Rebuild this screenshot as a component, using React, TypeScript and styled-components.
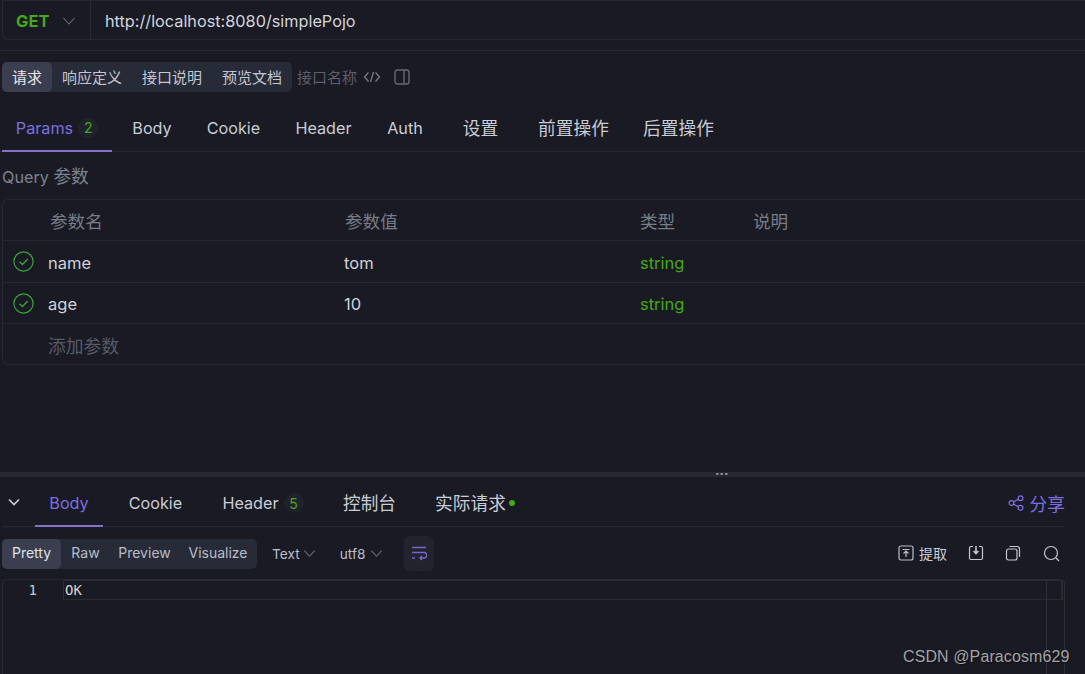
import React from "react";
import styled, { createGlobalStyle } from "styled-components";

const Global = createGlobalStyle`
  html, body { margin: 0; padding: 0; background: #191a23; }
  body { font-family: Inter, "Noto Sans CJK SC", sans-serif; overflow: hidden; }
  * { box-sizing: border-box; }
`;
const Page = styled.div`
  width: 1085px; height: 674px; background: #191a23; color: #d3d7e0;
  display: flex; flex-direction: column; overflow: hidden; position: relative;
`;
const UrlBar = styled.div`
  height: 40px; margin-left: 2px; display: flex; align-items: center;
  border: 1px solid #272935; border-right: none; border-top-color: #23252f; border-radius: 0 0 0 6px;
`;
const Method = styled.div`
  width: 88px; height: 100%; display: flex; align-items: center; padding: 2px 0 0 13px; gap: 13px;
  color: #46a81c; font-weight: 700; font-size: 16.5px; border-right: 1px solid #272935;
`;
const UrlText = styled.div` padding: 2px 0 0 14px; font-size: 16.25px; color: #d2d5dd; `;
const Rule = styled.div` height: 1px; background: #262833; margin-top: 10px; `;
const Modes = styled.div` display: flex; align-items: center; margin: 11px 0 0 2px; height: 30px; `;
const Segment = styled.div`
  display: flex; height: 30px; background: #272a37; border-radius: 5px;
`;
const SegItem = styled.div<{ $on?: boolean; $w: number }>`
  width: ${p => p.$w}px; display: flex; align-items: center; justify-content: center;
  font-size: 15px; padding-bottom: 2px; border-radius: 5px; color: ${p => (p.$on ? "#e6e8ee" : "#c3c7d1")};
  background: ${p => (p.$on ? "#3b3e4f" : "transparent")};
`;
const Ghost = styled.div` font-size: 15px; padding-bottom: 2px; color: #5c5f6b; margin-left: 5px; white-space: nowrap; `;
const IconBtn = styled.span<{ $ml: number }>` display: inline-flex; margin: -1px 0 0 ${p => p.$ml}px; `;
const Tabs = styled.div<{ $mt: number; $h: number; $ml?: number; $right?: number }>`
  display: flex; align-items: stretch; height: ${p => p.$h}px; margin: ${p => p.$mt}px ${p => p.$right ?? 0}px 0 ${p => p.$ml ?? 0}px;
  border-bottom: 1px solid #262833; position: relative;
`;
const Tab = styled.div<{ $on?: boolean; $w: number; $cjk?: boolean; $pt?: number }>`
  width: ${p => p.$w}px; display: flex; align-items: center; justify-content: center; white-space: nowrap;
  font-size: ${p => (p.$cjk ? "17.7px" : "16.2px")}; color: ${p => (p.$on ? "#7c6fe0" : "#c9cdd6")}; margin-bottom: -1px;
  padding-top: ${p => p.$pt ?? 0}px; padding-bottom: ${p => (p.$cjk ? 2 : 0)}px;
  border-bottom: 2px solid ${p => (p.$on ? "#8471c9" : "transparent")};
`;
const Count = styled.span`
  width: 20px; height: 20px; border-radius: 50%; background: #20222b; color: #46a81c;
  display: inline-flex; align-items: center; justify-content: center; font-size: 14px; margin-left: 5px;
`;
const Dot = styled.span` width: 6px; height: 6px; border-radius: 50%; background: #46a81c; margin: 2px 0 0 3px; `;
const QueryTitle = styled.div` font-size: 16.2px; color: #7d8290; margin: 14px 0 0 2px; height: 22px; line-height: 22px; `;
const QueryCjk = styled.span` font-size: 17.7px; `;
const Table = styled.div`
  margin: 11px 0 0 2px; border: 1px solid #262833; border-right: none; border-radius: 6px 0 0 6px;
`;
const Row = styled.div<{ $h: number; $last?: boolean }>`
  display: grid; grid-template-columns: 45px 296px 296px 112px 1fr; align-items: center; height: ${p => p.$h}px;
  border-bottom: ${p => (p.$last ? "none" : "1px solid #262833")};
  font-size: 16.5px;
`;
const Head = styled.div<{ $pl?: number }>` color: #777c89; font-size: 17.6px; padding-left: ${p => p.$pl ?? 1}px; `;
const Cell = styled.div` color: #cfd3dc; padding-top: 2px; `;
const Type = styled(Cell)` color: #46a81c; `;
const Check = styled.div` display: flex; padding: 0 0 0 10px; `;
const Add = styled.div` color: #565a66; font-size: 17.8px; padding-top: 2px; `;
const Spacer = styled.div` height: 107px; `;
const Split = styled.div`
  height: 5px; background: #262833; position: relative;
  &::after { content: ""; position: absolute; left: 715px; top: 1px; width: 13px; height: 2px;
    background-image: radial-gradient(circle, #8a8d99 1px, transparent 1.2px); background-size: 4.5px 2px; }
`;
const Collapse = styled.div` width: 33px; display: flex; align-items: center; padding: 0 0 0 6px; `;
const Share = styled.div`
  margin-left: auto; display: flex; align-items: center; gap: 6px; color: #7c6fe0; font-size: 17.7px; padding: 3px 0 0;
`;
const Toolbar = styled.div` display: flex; align-items: center; height: 35px; margin: 9px 25px 0 2px; `;
const SegSmall = styled(Segment)` height: 30px; `;
const SegSmallItem = styled(SegItem)` font-size: 14px; color: ${p => (p.$on ? "#dfe2ea" : "#b9bdc9")}; `;
const Select = styled.div<{ $ml: number; $gap: number }>`
  display: flex; align-items: center; gap: ${p => p.$gap}px; font-size: 13.7px; color: #b9bdc9; margin-left: ${p => p.$ml}px;
`;
const Wrap = styled.div`
  width: 30px; height: 35px; margin-left: 21px; border-radius: 6px; background: #22232f;
  display: flex; align-items: center; justify-content: center;
`;
const Tools = styled.div` margin: -1px 0 0 auto; display: flex; align-items: center; `;
const Extract = styled.div` display: flex; align-items: center; gap: 5px; font-size: 14px; color: #c9cdd6; margin-right: 21px; `;
const ToolIcon = styled.span<{ $mr: number }>` display: inline-flex; margin-right: ${p => p.$mr}px; `;
const Editor = styled.div`
  position: relative; flex: 1; margin: 8px 20px 0 2px; border-left: 1px solid #262833;
  border-right: 1px solid #2b2d37; border-top: 1px solid #262833;
  font-family: "DejaVu Sans Mono", monospace; border-radius: 5px 5px 0 0;
`;
const Line = styled.div` display: flex; height: 20px; align-items: center; `;
const Gutter = styled.div` width: 60px; text-align: right; padding-right: 26px; color: #c4c8d0; font-size: 14px; `;
const Code = styled.div`
  flex: 1; height: 20px; line-height: 18px; color: #d4d4cf; font-size: 14px; padding-left: 1px;
  border: 1px solid #2a2b2a; border-left-color: #2f302e; border-right-width: 2px; margin-right: 1px;
`;
const ScrollEdge = styled.div` position: absolute; top: 0; bottom: 0; right: 17px; width: 1px; background: #2d2f39; `;
const Watermark = styled.div`
  position: absolute; left: 903px; top: 648px; font-family: "Liberation Sans", sans-serif; font-size: 16px;
  color: #a3a3a6; letter-spacing: 0.1px; white-space: nowrap; text-shadow: 1px 1px 1px #111;
`;

const Chevron = ({ c = "#6b6e79", s = 14 }: { c?: string; s?: number }) => (
  <svg width={s} height={s} viewBox="0 0 14 14" fill="none" stroke={c} strokeWidth="1.1"><path d="M1.5 4 7 10l5.5-6" /></svg>
);
const CheckIcon = () => (
  <svg width="21" height="21" viewBox="0 0 21 21" fill="none" stroke="#3f9f3f" strokeWidth="1.2">
    <circle cx="10.5" cy="10.5" r="9.6" />
    <path d="M6.5 10.8 9.5 13.5 14.7 8" strokeWidth="1.4" />
  </svg>
);

export default function App() {
  return (
    <Page>
      <Global />
      <UrlBar>
        <Method>GET<Chevron /></Method>
        <UrlText>http://localhost:8080/simplePojo</UrlText>
      </UrlBar>
      <Rule />
      <Modes>
        <Segment>
          <SegItem $on $w={50}>请求</SegItem>
          <SegItem $w={80}>响应定义</SegItem>
          <SegItem $w={80}>接口说明</SegItem>
          <SegItem $w={80}>预览文档</SegItem>
        </Segment>
        <Ghost>接口名称</Ghost>
        <IconBtn $ml={6}>
          <svg width="18" height="14" viewBox="0 0 18 14" fill="none" stroke="#777a86" strokeWidth="1.3"><path d="M5.5 2.5 1.5 7l4 4.5M12.500 2.500l4 4.500-4 4.500M10.500 2 7.500 12" /></svg>
        </IconBtn>
        <IconBtn $ml={13}>
          <svg width="16" height="16" viewBox="0 0 16 16" fill="none" stroke="#666975" strokeWidth="1.4"><rect x="1" y="1" width="14" height="14" rx="2.500" /><path d="M10 1v14" /></svg>
        </IconBtn>
      </Modes>
      <Tabs $mt={13} $h={47}>
        <Tab $w={2} />
        <Tab $on $w={110}>Params<Count>2</Count></Tab>
        <Tab $w={80}>Body</Tab>
        <Tab $w={83}>Cookie</Tab>
        <Tab $w={97}>Header</Tab>
        <Tab $w={66}>Auth</Tab>
        <Tab $cjk $w={85}>设置</Tab>
        <Tab $cjk $w={101}>前置操作</Tab>
        <Tab $cjk $w={109}>后置操作</Tab>
      </Tabs>
      <QueryTitle>Query <QueryCjk>参数</QueryCjk></QueryTitle>
      <Table>
        <Row $h={41}>
          <div /><Head $pl={2}>参数名</Head><Head>参数值</Head><Head $pl={0}>类型</Head><Head>说明</Head>
        </Row>
        <Row $h={42}>
          <Check><CheckIcon /></Check><Cell>name</Cell><Cell>tom</Cell><Type>string</Type><div />
        </Row>
        <Row $h={41}>
          <Check><CheckIcon /></Check><Cell>age</Cell><Cell>10</Cell><Type>string</Type><div />
        </Row>
        <Row $h={40} $last>
          <div /><Add>添加参数</Add>
        </Row>
      </Table>
      <Spacer />
      <Split />
      <Tabs $mt={0} $h={50} $ml={2} $right={20}>
        <Collapse>
          <svg width="12" height="8" viewBox="0 0 12 8" fill="none" stroke="#c9cdd6" strokeWidth="1.7"><path d="M1 1.500 6 6.500l5-5" /></svg>
        </Collapse>
        <Tab $on $w={68} $pt={4}>Body</Tab>
        <Tab $w={105} $pt={4}>Cookie</Tab>
        <Tab $w={110} $pt={4}>Header<Count>5</Count></Tab>
        <Tab $cjk $w={103} $pt={4}>控制台</Tab>
        <Tab $cjk $w={108} $pt={4}>实际请求<Dot /></Tab>
        <Share>
          <svg width="16" height="16" viewBox="0 0 16 16" fill="none" stroke="#7c6fe0" strokeWidth="1.2"><circle cx="3.500" cy="8" r="2.400" /><circle cx="12.500" cy="3.200" r="2.400" /><circle cx="12.500" cy="12.800" r="2.400" /><path d="M5.600 6.800 10.400 4.300M5.600 9.200l4.800 2.500" /></svg>
          分享
        </Share>
      </Tabs>
      <Toolbar>
        <SegSmall>
          <SegSmallItem $on $w={59}>Pretty</SegSmallItem>
          <SegSmallItem $w={49}>Raw</SegSmallItem>
          <SegSmallItem $w={69}>Preview</SegSmallItem>
          <SegSmallItem $w={78}>Visualize</SegSmallItem>
        </SegSmall>
        <Select $ml={15} $gap={3}>Text<Chevron s={13} /></Select>
        <Select $ml={24} $gap={5}>utf8<Chevron s={13} /></Select>
        <Wrap>
          <svg width="16" height="15" viewBox="0 0 16 15" fill="none" stroke="#7566cc" strokeWidth="1.4"><path d="M1 1.500h14M1 6.500h12a2.700 2.700 0 0 1 0 5.500H9M11 10l-2 2 2 2M1 12h3" /></svg>
        </Wrap>
        <Tools>
          <Extract>
            <svg width="16" height="16" viewBox="0 0 16 16" fill="none" stroke="#b9bdc9" strokeWidth="1.2"><rect x="1" y="1" width="14" height="14" rx="2" /><path d="M4.500 4.500h7M8 12V6.500M5.500 8.500 8 6l2.500 2.500" /></svg>
            提取
          </Extract>
          <ToolIcon $mr={21}>
            <svg width="16" height="16" viewBox="0 0 16 16" fill="none" stroke="#c3c7d1" strokeWidth="1.2"><path d="M5 1.500H3A1.500 1.500 0 0 0 1.500 3v10A1.500 1.500 0 0 0 3 14.500h10a1.500 1.500 0 0 0 1.500-1.500V3A1.500 1.500 0 0 0 13 1.500h-2" /><path d="M8 1v7M5.500 6 8 8.500 10.500 6" strokeWidth="1.600" /></svg>
          </ToolIcon>
          <ToolIcon $mr={22}>
            <svg width="16" height="16" viewBox="0 0 16 16" fill="none" stroke="#c3c7d1" strokeWidth="1.2"><rect x="1.500" y="4" width="10.500" height="11" rx="2" /><path d="M4.500 1.500h7.500a2.500 2.500 0 0 1 2.500 2.500v8" /></svg>
          </ToolIcon>
          <ToolIcon $mr={0}>
            <svg width="17" height="17" viewBox="0 0 17 17" fill="none" stroke="#c3c7d1" strokeWidth="1.2"><circle cx="8" cy="8" r="6.500" /><path d="M13 13l3 3" /></svg>
          </ToolIcon>
        </Tools>
      </Toolbar>
      <Editor>
        <Line><Gutter>1</Gutter><Code>OK</Code></Line>
        <ScrollEdge />
      </Editor>
      <Watermark>CSDN @Paracosm629</Watermark>
    </Page>
  );
}
